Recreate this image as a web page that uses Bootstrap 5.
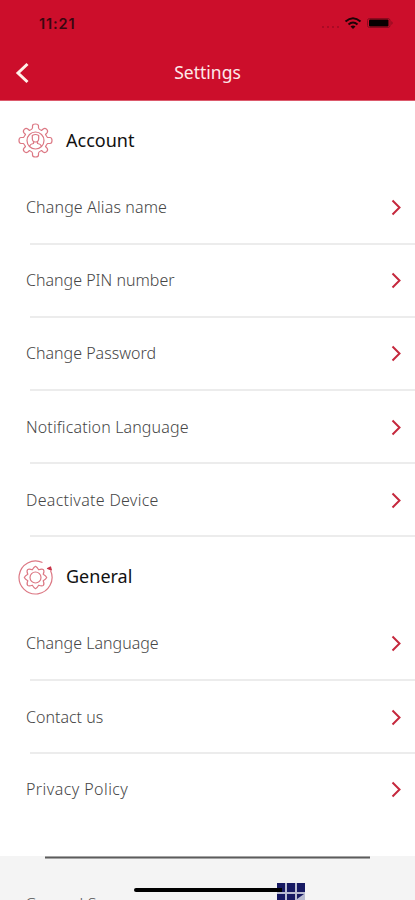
<!DOCTYPE html>
<html lang="en">
<head>
<meta charset="utf-8">
<meta name="viewport" content="width=device-width, initial-scale=1">
<title>Settings</title>
<link href="https://cdn.jsdelivr.net/npm/bootstrap@5.3.0/dist/css/bootstrap.min.css" rel="stylesheet">
<style>
  body { font-family: "Noto Sans", "Open Sans", sans-serif; background: #fff; }
  .screen { width: 415px; height: 900px; }
  .topbar { height: 101px; background: #cc0e2b; border-bottom: 1px solid #dc5a6c; }
  .status { height: 45px; padding: 1px 20px 0 39px; color: #3a0710; }
  .clock { font: 600 14.5px "Inter", sans-serif; letter-spacing: .9px; }
  .titlebar { height: 55px; padding-left: 15px; }
  .title { font-size: 17.5px; color: #fde9e9; }
  .section-head { padding-left: 18px; gap: 13px; height: 70.4px; padding-top: 9px; }
  .section-head.general { padding-top: 9.5px; }
  .section-head h2 { font-size: 18px; font-weight: 400; color: #111; }
  .entry { height: 73.2px; padding: 0 13px 2px 26px; font-size: 16px; font-weight: 300; color: #464646; }
  .entry::after { content: ""; left: 30px; right: 0; bottom: 0; height: 2px; background: #ececec; position: absolute; }
  .entry.final { height: 101.700px; padding-bottom: 31px; }
  .entry.final::after { display: none; }
  .track-1 { letter-spacing: .13px; }
  .track-2 { letter-spacing: .3px; }
  .track-3 { letter-spacing: .43px; }
  .footer-area { background: #f4f4f4; }
  .rule { width: 325px; height: 3px; margin-left: 45px; background: #5c5c5c; border-top: 1px solid #a5a5a5; border-bottom: 1px solid #a5a5a5; }
  .home-bar { left: 134px; top: 32px; width: 148px; height: 4px; border-radius: 2px; background: #000; }
  .brand { left: 277px; top: 27px; }
  .next-entry { left: 25px; top: 36.5px; font-size: 16px; font-weight: 300; color: #555; letter-spacing: .2px; }
</style>
<script src="https://cdn.jsdelivr.net/npm/bootstrap@5.3.0/dist/js/bootstrap.bundle.min.js"></script>
</head>
<body>
<svg class="d-none">
  <symbol id="chev" viewBox="0 0 12 18"><path d="M2.500 2.500 9.500 9.500l-7 7" fill="none" stroke="#c5283d" stroke-width="2"/></symbol>
</svg>
<div class="screen d-flex flex-column overflow-hidden">
  <header class="topbar flex-shrink-0">
    <div class="status d-flex align-items-center justify-content-between">
      <span class="clock">11:21</span>
      <svg width="76" height="14" viewBox="0 0 76 14">
        <g fill="#9c0a22"><circle cx="4" cy="11" r=".9"/><circle cx="9" cy="11" r=".9"/><circle cx="14" cy="11" r=".9"/><circle cx="19" cy="11" r=".9"/></g>
        <g fill="none" stroke="#1c0306" stroke-width="2"><path d="M26.500 5.500q7.500-6.500 15 0M29.500 8.500q4.500-4 9 0"/></g>
        <path d="M31.500 10.500q2.500-2 5 0L34 13z" fill="#1c0306"/>
        <rect x="48.500" y="2.500" width="22.500" height="9" rx="2" fill="none" stroke="#8a0a1e"/>
        <rect x="50" y="3.500" width="19.500" height="7" rx="1" fill="#080001"/>
        <path d="M72.500 5v4q2-2 0-4" fill="#7a0a1c"/>
      </svg>
    </div>
    <div class="titlebar d-flex align-items-center position-relative">
      <svg width="15" height="22" viewBox="0 0 15 22"><path d="M12.500 2 3 11l9.500 9" fill="none" stroke="#fff0e8" stroke-width="3"/></svg>
      <span class="title position-absolute start-0 end-0 text-center">Settings</span>
    </div>
  </header>
  <main class="flex-shrink-0">
    <div class="section-head d-flex align-items-center">
      <svg width="35" height="35" viewBox="0 0 35 35" fill="none" stroke="#dc7884" stroke-width="1.200" stroke-linejoin="round">
        <path d="M14.500 5V3Q14.500 1 17.500 1T20.500 3V5Q20.700 6.300 23.500 7.500L25.200 6Q27 4.600 28.700 6.300T29 9.800L27.500 11.500Q28.700 13.500 29.500 14.500H32Q34 14.500 34 17.500T32 20.500H29.500Q28.700 21.500 27.500 23.500L29 25.200Q30.400 27 28.700 28.700T25.200 29L23.500 27.500Q20.700 28.700 20.500 30V32Q20.500 34 17.500 34T14.500 32V30Q14.300 28.700 11.500 27.500L9.800 29Q8 30.400 6.300 28.700T6 25.200L7.500 23.500Q6.300 21.500 5.500 20.500H3Q1 20.500 1 17.500T3 14.500H5.500Q6.300 13.500 7.500 11.500L6 9.800Q4.600 8 6.300 6.300T9.800 6L11.500 7.500Q14.300 6.300 14.500 5Z"/>
        <circle cx="17.500" cy="17.500" r="8.500"/>
        <path d="M14.300 12.500q3.200-2 6.400 0v3q0 3.500-3.200 3.500t-3.200-3.500zM15.500 18.500v2q-3.500.5-4 3M19.500 18.500v2q3.500.5 4 3"/>
      </svg>
      <h2 class="mb-0">Account</h2>
    </div>
    <div class="entry track-1 position-relative d-flex align-items-center justify-content-between"><span>Change Alias name</span><svg width="12" height="18"><use href="#chev"/></svg></div>
    <div class="entry position-relative d-flex align-items-center justify-content-between"><span>Change PIN number</span><svg width="12" height="18"><use href="#chev"/></svg></div>
    <div class="entry position-relative d-flex align-items-center justify-content-between"><span>Change Password</span><svg width="12" height="18"><use href="#chev"/></svg></div>
    <div class="entry track-1 position-relative d-flex align-items-center justify-content-between"><span>Notification Language</span><svg width="12" height="18"><use href="#chev"/></svg></div>
    <div class="entry track-2 position-relative d-flex align-items-center justify-content-between"><span>Deactivate Device</span><svg width="12" height="18"><use href="#chev"/></svg></div>
    <div class="section-head general d-flex align-items-center">
      <svg width="35" height="35" viewBox="0 0 35 35" fill="none" stroke="#dc7884" stroke-width="1.200" stroke-linejoin="round">
        <path d="M24.500 2.500A16.500 16.500 0 1 0 32.500 10.500"/>
        <path d="M29.500 8.500l3-1.500 .8 3z" fill="#c93348" stroke="#c93348"/>
        <circle cx="17.500" cy="17.500" r="5.500"/>
        <path d="M17.500 6.300Q19 7 20.700 9.800Q24 8.400 25.400 9.600Q26.600 11 25.200 14.300Q28 16 28.700 17.500Q28 19 25.200 20.700Q26.600 24 25.400 25.400Q24 26.600 20.700 25.200Q19 28 17.500 28.700Q16 28 14.300 25.200Q11 26.600 9.600 25.400Q8.400 24 9.800 20.700Q7 19 6.300 17.500Q7 16 9.800 14.300Q8.400 11 9.600 9.600Q11 8.400 14.300 9.800Q16 7 17.500 6.300Z"/>
      </svg>
      <h2 class="mb-0">General</h2>
    </div>
    <div class="entry position-relative d-flex align-items-center justify-content-between"><span>Change Language</span><svg width="12" height="18"><use href="#chev"/></svg></div>
    <div class="entry position-relative d-flex align-items-center justify-content-between"><span>Contact us</span><svg width="12" height="18"><use href="#chev"/></svg></div>
    <div class="entry final track-3 position-relative d-flex align-items-center justify-content-between"><span>Privacy Policy</span><svg width="12" height="18"><use href="#chev"/></svg></div>
  </main>
  <footer class="footer-area position-relative flex-grow-1 overflow-hidden">
    <div class="rule"></div>
    <span class="next-entry position-absolute text-nowrap">General S</span>
    <div class="home-bar position-absolute"></div>
    <svg class="brand position-absolute" width="28" height="18" viewBox="0 0 28 18"><path fill="#b9bcd2" d="M0 0h28v18H0z"/><path fill="#171a63" d="M0 0h8v9H0zM10 0h8v9h-8zM20 0h8v9h-8zM0 11h8v7H0zM10 11h8v7h-8zM20 11h7l-7 5z"/><path d="M0 5h5v4H0z" fill="#000"/></svg>
  </footer>
</div>
</body>
</html>
